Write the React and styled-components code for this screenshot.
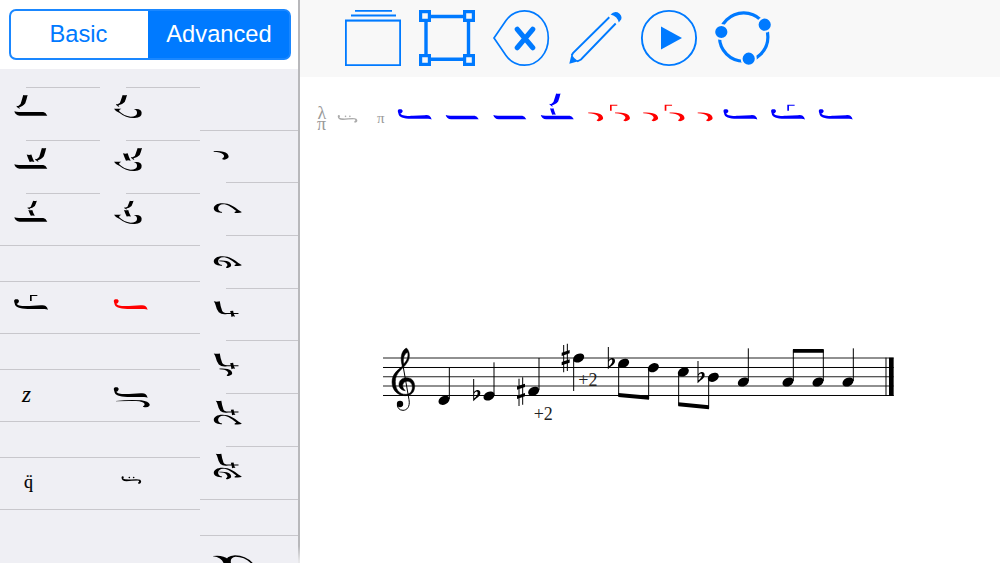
import * as React from "react";
import styled, { createGlobalStyle, css } from "styled-components";

const GlobalStyle = createGlobalStyle`
  * {
    box-sizing: border-box;
  }

  body {
    margin: 0;
    background-color: white;
    font-family: "Liberation Sans", Arial, sans-serif;
    overflow: hidden;
  }
`;

// neume outlines, three units to the pixel
const NEUMES = {
  ison: "M0 0Q6 2 14 2H87Q94 3 99 13H16Q3 12 0 0Z",
  petasti:
    "M1 12C-3 1 2 0 7 0C14 0 16 6 12 10Q10 13 7 13C10 19 22 21 45 20L80 18Q90 17 94 20Q99 23 101 31Q95 28 86 29H40C15 28 3 25 1 12Z",
  psefiston:
    "M20 0Q26 2 33 0Q30 14 26 25Q19 35 4 38Q-1 36 0 32Q3 34 6 32Q13 30 14 20ZM2 34Q8 33 10 42Q4 41 2 34Z",
  kentima: "M0 0Q7 2 14 0Q17 11 23 22Q15 20 9 22Q4 12 0 0Z",
  bowl: "M0 0L22 0Q15 3 15 7Q30 22 50 24Q68 24 69 14Q70 4 59 2Q81 -2 83 12Q84 26 62 28Q36 29 17 13Q6 10 0 0Z",
  apostrophos:
    "M0 0Q30 -2 41 8Q48 17 42 22Q34 28 26 25Q24 22 29 20Q34 16 28 10Q20 2 0 2Z",
  elafron:
    "M25 28C-8 30 -8 0 26 0C48 0 62 11 74 20L84 26Q84 29 63 29Q60 26 68 23C50 10 42 3 28 3C10 3 8 25 25 26Z",
  chamili:
    "M0 0Q8 2 18 0Q20 16 25 28Q28 35 40 35H74V38H40Q24 41 15 33Q8 24 6 13Q4 5 0 0ZM49 29Q54 28 58 28Q59 39 64 46Q58 44 53 47Q52 38 49 29Z",
  gorgon: "M0 18V0H22V3H5V18Z",
  isaki:
    "M0 3Q2 -2 6 1Q8 5 5 8Q10 11 30 10Q50 8 56 11Q62 17 56 22Q48 25 50 19Q56 16 50 13Q30 13 15 15Q0 15 0 3ZM21 4a2.5 2.5 0 1 0 5 0a2.5 2.5 0 1 0 -5 0M34 4a2.5 2.5 0 1 0 5 0a2.5 2.5 0 1 0 -5 0",
  undertail:
    "M0 3Q40 -2 76 1Q98 4 101 13Q102 21 90 22Q80 22 81 19Q86 18 86 12Q82 4 60 3Q30 2 0 4Z",
  arch: "M0 2Q30 -2 46 12V24H32Q26 6 0 3ZM38 24Q36 2 66 0Q98 0 120 24H114Q94 4 68 4Q50 6 54 24Z",
};

// each mark is [neume, x, y, scaleX, scaleY]
const Marks = ({ marks }) =>
  marks.map(([name, x, y, sx = 1, sy = sx], i) => (
    <path
      key={i}
      d={NEUMES[name]}
      transform={`translate(${x} ${y}) scale(${sx / 3} ${sy / 3})`}
    />
  ));

const BAR = ["ison", 14.3, 24.3];
const BOWL = ["bowl", 14, 21.7];

const FIRST_COLUMN = [
  { gap: 18 },
  { inset: true, marks: [["psefiston", 16.6, 8], BAR] },
  {
    inset: true,
    marks: [["kentima", 26.7, 14.6], ["psefiston", 35.2, 8, 1], BAR],
  },
  {
    inset: true,
    height: 52,
    marks: [["psefiston", 27.5, 7.8, 0.85, 0.62], ["kentima", 28.3, 17, 0.85, 0.8], BAR],
  },
  { height: 36 },
  { height: 52, marks: [["gorgon", 30, 14], ["petasti", 14.3, 18.3]] },
  { height: 36 },
  { height: 52, letter: "z" },
  { height: 36 },
  { height: 52, letter: "q" },
  { height: 60 },
];

const SECOND_COLUMN = [
  { gap: 18 },
  { inset: true, marks: [["psefiston", 16, 8, 1, 0.85], BOWL] },
  {
    inset: true,
    marks: [["kentima", 23, 13.3], ["psefiston", 31, 8, 1, 0.85], BOWL],
  },
  {
    inset: true,
    height: 52,
    marks: [["psefiston", 24.2, 7.8, 0.85, 0.62], ["kentima", 24, 17, 0.9, 0.9], BOWL],
  },
  { height: 36 },
  { height: 52, color: "#f00", marks: [["petasti", 14, 18.3]] },
  { height: 36 },
  { height: 52, marks: [["petasti", 14, 18.3], ["undertail", 16, 31]] },
  { height: 36 },
  { height: 52, marks: [["isaki", 21.5, 19.2]] },
  { height: 60 },
];

const THIRD_COLUMN = [
  { gap: 61 },
  { height: 52, marks: [["apostrophos", 13.7, 21]] },
  { inset: true, marks: [["elafron", 13.7, 21.3]] },
  {
    inset: true,
    marks: [["elafron", 13.7, 21.3], ["apostrophos", 19.2, 25.6, 0.8, 0.85]],
  },
  { inset: true, height: 52, marks: [["chamili", 13.8, 13.3]] },
  {
    inset: true,
    marks: [["chamili", 13.8, 13.5], ["apostrophos", 19.5, 28.6, 0.85]],
  },
  {
    inset: true,
    marks: [["chamili", 15.8, 7.8, 0.92], ["elafron", 13.7, 21.8]],
  },
  {
    inset: true,
    marks: [
      ["chamili", 15.8, 7.8, 0.92],
      ["elafron", 13.7, 21.8],
      ["apostrophos", 19.2, 25.8, 0.8, 0.85],
    ],
  },
  { height: 36 },
  { height: 52, marks: [["arch", 13, 20.3]] },
];

const CHANT_BLUE = [
  ["petasti", 98, 32.2],
  ["ison", 145.7, 38],
  ["ison", 193.3, 38],
  ["psefiston", 249.5, 16.5, 1, 0.95],
  ["kentima", 250, 31.3, 0.75, 0.88],
  ["ison", 240.8, 38],
  ["petasti", 423.7, 32.2],
  ["gorgon", 487.3, 27.7],
  ["petasti", 471.3, 32.2],
  ["petasti", 519, 32.2],
];

const CHANT_RED = [
  ["apostrophos", 288.2, 35.5],
  ["gorgon", 310, 27.7],
  ["apostrophos", 315, 35.5],
  ["apostrophos", 343.2, 35.5],
  ["gorgon", 364.7, 27.7],
  ["apostrophos", 369.6, 35.5],
  ["apostrophos", 397.7, 35.5],
];

const NeumeColumn = ({ cells }) => (
  <Column>
    {cells.map((cell, i) =>
      cell.gap ? (
        <Gap key={i} $height={cell.gap} />
      ) : (
        <Cell key={i} $height={cell.height} $inset={cell.inset}>
          {cell.marks && (
            <Glyph viewBox="0 0 60 52" $color={cell.color}>
              <Marks marks={cell.marks} />
            </Glyph>
          )}
          {cell.letter === "z" && <Letter $italic>z</Letter>}
          {cell.letter === "q" && <Letter>q̈</Letter>}
        </Cell>
      ),
    )}
  </Column>
);

const Toolbar = () => (
  <Bar>
    <Icon viewBox="0 0 56 56">
      <path d="M10 .8H47M6 5.5H51" strokeWidth="1.8" />
      <path d="M.9 10.3H55.1V55.1H.9Z" strokeWidth="1.8" />
      <path d="M1 11.5H55" strokeWidth="1.2" opacity=".5" />
    </Icon>
    <Icon viewBox="0 0 56 56">
      <path d="M12 6.5H44M12 49.2H44M7 12V44M49.5 12V44" strokeWidth="3.4" />
      <path
        d="M1.6 1.6H10.4V10.4H1.6ZM45.6 1.6H54.4V10.4H45.6ZM1.6 45.6H10.4V54.4H1.6ZM45.6 45.6H54.4V54.4H45.6Z"
        strokeWidth="3.2"
      />
    </Icon>
    <Icon viewBox="0 0 56 56">
      <path
        d="M1 28L13 10.5C18 3.5 24 .8 31.5 .8C45 .8 55.3 13 55.3 28S45 55.2 31.5 55.2C24 55.2 18 52.5 13 45.5Z"
        strokeWidth="1.7"
      />
      <path d="M24.3 19.3L39.7 37.7M39.7 19.3L24.3 37.7" strokeWidth="5.2" strokeLinecap="round" />
    </Icon>
    <Icon viewBox="0 0 56 56">
      <path d="M4.7 45.5L6 43L42.3 7.3M10 51.5L14 49.5L48.7 13.5" strokeWidth="1.9" />
      <path d="M2.3 53.7L4.7 43.5Q6.5 49.5 12.3 51Z" fill="currentColor" stroke="none" />
      <path d="M43.6 4.4Q46.5 1 50.5 2.2Q55.5 5 54.3 9.3L51.8 12.6Q50.8 6.5 43.6 4.4Z" fill="currentColor" stroke="none" />
    </Icon>
    <Icon viewBox="0 0 56 56">
      <circle cx="28" cy="28" r="27.1" strokeWidth="1.9" />
      <path d="M20 16.5L41 28L20 39.5Z" fill="currentColor" stroke="none" />
    </Icon>
    <Icon viewBox="0 0 56 56">
      <circle cx="28.7" cy="27" r="24.2" strokeWidth="3.2" />
      <g fill="currentColor" stroke="#f8f8f8" strokeWidth="2">
        <circle cx="6.3" cy="22" r="7.1" />
        <circle cx="49.7" cy="14.7" r="7.1" />
        <circle cx="33.7" cy="48.7" r="7.1" />
      </g>
    </Icon>
  </Bar>
);

const NOTES = [
  [207, 196],
  [342, 183],
  [476, 169],
  [611, 69],
  [746, 85],
  [835, 98],
  [925, 111],
  [1015, 127],
  [1105, 141],
  [1239, 141],
  [1329, 141],
  [1419, 141],
];

// [x, top, bottom]
const STEMS = [
  [223, 97, 192],
  [357, 82, 180],
  [492, 69, 165],
  [596, 73, 168],
  [731, 89, 184],
  [821, 102, 192],
  [911, 115, 212],
  [1001, 131, 220],
  [1120, 40, 138],
  [1255, 44, 138],
  [1345, 44, 138],
  [1435, 40, 138],
];

const Flat = ({ x, y }) => (
  <path
    transform={`translate(${x} ${y})`}
    fillRule="evenodd"
    d="M-1.5 0H1.5V39C8 31 20 31 20 42C20 52 8 57 -1.5 67ZM1.5 44V58C7 53 12 48 12 41C11 35 5 37 1.5 44Z"
  />
);

const Sharp = ({ x, y }) => (
  <path
    transform={`translate(${x} ${y})`}
    d="M4.5 4H7.5V86H4.5ZM15.5 0H18.5V82H15.5ZM0 27L24 19V29L0 37ZM0 55L24 47V57L0 65Z"
  />
);

const Staff = () => (
  <StaffSvg viewBox="0 0 1560 280">
    <path d="M24 97.5H1556M24 181.5H1556" stroke="black" strokeWidth="3" />
    <path
      d="M24 69H1556M24 125.5H1556M24 153H1556"
      stroke="#222"
      strokeWidth="3.2"
    />
    <path
      fillRule="evenodd"
      stroke="black"
      strokeWidth="1.5"
      d="M82 94C75 70 78 48 94 39C105 48 107 70 95 85C85 101 61 112 61 140C61 162 72 178 92 178C106 178 112 168 112 156C112 147 106 139 97 139C87 139 83 146 83 153C84 160 87 164 91 167C78 166 71 157 72 147C73 135 82 128 95 128C111 128 119 140 119 153C119 171 110 182 90 182C68 182 51 166 51 141C51 117 69 104 82 94ZM98 52C88 56 83 70 86 87C95 78 101 66 98 52Z"
    />
    <path d="M83 86L102 194C106 216 95 226 84 226C73 226 67 218 67 210" fill="none" stroke="black" strokeWidth="3" />
    <circle cx="75" cy="207" r="9.5" />
    {NOTES.map(([x, y]) => (
      <ellipse key={x} cx={x} cy={y} rx="17.5" ry="12.5" transform={`rotate(-27 ${x} ${y})`} />
    ))}
    {STEMS.map(([x, top, bottom]) => (
      <path key={x} d={`M${x} ${top}V${bottom}`} stroke="black" strokeWidth="3" />
    ))}
    <path d="M730 174L822 182V194L730 186ZM910 202L1002 211V223L910 214ZM1254 42H1346V53H1254Z" />
    <Flat x={296} y={132} />
    <Flat x={700} y={36} />
    <Flat x={969} y={78} />
    <Sharp x={426} y={127} />
    <Sharp x={560} y={26} />
    <path d="M1533 68V183" stroke="black" strokeWidth="3" />
    <path d="M1542 68H1556V183H1542Z" />
    <Alteration x="476" y="254">
      +2
    </Alteration>
    <Alteration x="610" y="153">
      +2
    </Alteration>
  </StaffSvg>
);

const App = () => {
  const [tab, setTab] = React.useState("Advanced");

  return (
    <>
      <GlobalStyle />
      <Layout>
        <Sidebar>
          <SidebarHeader>
            <Segments>
              {["Basic", "Advanced"].map((name) => (
                <Segment
                  key={name}
                  $active={tab === name}
                  onClick={() => setTab(name)}
                >
                  {name}
                </Segment>
              ))}
            </Segments>
          </SidebarHeader>
          <Columns>
            <NeumeColumn cells={FIRST_COLUMN} />
            <NeumeColumn cells={SECOND_COLUMN} />
            <NeumeColumn cells={THIRD_COLUMN} />
          </Columns>
        </Sidebar>
        <Page>
          <Toolbar />
          <ChantLine viewBox="0 0 600 60">
            <Signature x="17.4" y="41.8">
              λ
            </Signature>
            <Signature x="17" y="53.3">
              π
            </Signature>
            <g fill="#aaa">
              <Marks marks={[["isaki", 37.7, 38]]} />
            </g>
            <Signature x="76.9" y="45.8" $small>
              π
            </Signature>
            <g fill="#00f">
              <Marks marks={CHANT_BLUE} />
            </g>
            <g fill="#f00">
              <Marks marks={CHANT_RED} />
            </g>
          </ChantLine>
          <Staff />
        </Page>
      </Layout>
    </>
  );
};

const Layout = styled("div")`
  display: flex;
  width: 1000px;
  height: 563px;
  overflow: hidden;
`;

const Sidebar = styled("aside")`
  display: flex;
  flex-flow: column nowrap;
  width: 300px;
  flex: none;
  border-right: 2px solid #b4b4b8;
  border-image: linear-gradient(#b8b8bb 0 545px, #e8e8ea 560px) 1;
  background-color: #efeff4;
`;

const SidebarHeader = styled("header")`
  height: 69px;
  flex: none;
  padding: 9px 0 0 9px;
  background-color: white;
`;

const Segments = styled("div")`
  display: grid;
  grid-template-columns: 137px 1fr;
  width: 282px;
  height: 51px;
  border: 2px solid #1a87ff;
  border-radius: 7px;
  overflow: hidden;
  background-color: #007aff;
`;

const Segment = styled("button")`
  border: none;
  padding: 0 2px 0 0;
  background-color: white;
  color: #007aff;
  font-family: inherit;
  font-size: 23.7px;
  cursor: pointer;

  ${({ $active }) =>
    $active &&
    css`
      padding: 0 0 0 1px;
      background-color: #007aff;
      color: white;
    `}
`;

const Columns = styled("div")`
  display: grid;
  grid-template-columns: 100px 100px 98px;
  flex: 1;
  min-height: 0;
  overflow: hidden;
`;

const Column = styled("div")`
  display: flex;
  flex-flow: column nowrap;
`;

const Gap = styled("div")`
  flex: none;
  height: ${({ $height }) => $height}px;
`;

const Cell = styled("div")`
  flex: none;
  height: ${({ $height = 53 }) => $height}px;
  background: linear-gradient(#c8c7cc, #c8c7cc) no-repeat
    ${({ $inset }) => ($inset ? "26px" : "0")} 0 / 100% 1px;
`;

const Glyph = styled("svg")`
  display: block;
  width: 60px;
  height: 52px;
  fill: ${({ $color = "black" }) => $color};
`;

const Letter = styled("span")`
  display: block;
  padding: 14px 0 0 24px;
  font: 18px/22px "Liberation Serif", serif;
  -webkit-text-stroke: 0.2px black;

  ${({ $italic }) =>
    $italic &&
    css`
      padding: 15px 0 0 22px;
      font-size: 23px;
      font-style: italic;
    `}
`;

const Page = styled("main")`
  display: flex;
  flex-flow: column nowrap;
  flex: 1;
  background-color: white;
`;

const Bar = styled("nav")`
  display: flex;
  gap: 18px;
  height: 77px;
  padding: 10px 45px;
  background-color: #f8f8f8;
`;

const Icon = styled("svg")`
  width: 56px;
  height: 56px;
  flex: none;
  overflow: visible;
  color: #007aff;
  fill: none;
  stroke: currentColor;
`;

const ChantLine = styled("svg")`
  display: block;
  width: 600px;
  height: 60px;
`;

const Signature = styled("text")`
  fill: #999;
  font-family: "Liberation Serif", serif;
  font-size: ${({ $small }) => ($small ? 15 : 18)}px;
`;

const StaffSvg = styled("svg")`
  display: block;
  width: 520px;
  height: 93.33px;
  margin: 198px 0 0 75px;
`;

const Alteration = styled("text")`
  fill: #222;
  font-family: "Liberation Serif", serif;
  font-size: 54px;
`;

export default App;
